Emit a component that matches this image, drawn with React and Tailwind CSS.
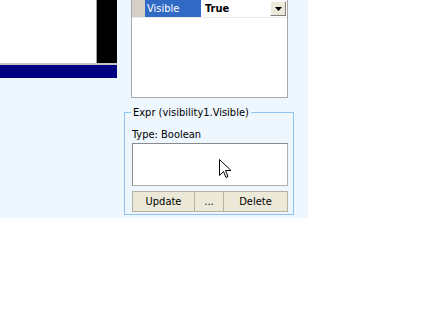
export default function App() {
  return (
    <div className="w-[440px] h-[320px] bg-white relative text-[11px] leading-[13px] text-black [font-family:'DejaVu_Sans_Condensed','DejaVu_Sans',sans-serif]">
      <div className="w-[308px] h-[218px] bg-[#eef6fe] flex">
        <div className="w-[117px] flex flex-col">
          <div className="h-[63px] flex">
            <div className="w-[96px] bg-white" />
            <div className="w-[1px] bg-[#a0a0a0]" />
            <div className="flex-1 bg-black" />
          </div>
          <div className="h-[2px] bg-[#c4c4c4]" />
          <div className="h-[13px] bg-[#000080]" />
        </div>
        <div className="w-[184px] ml-[7px] flex flex-col">
          <div className="w-[157px] h-[98px] ml-[7px] bg-white border-x border-b border-[#a9a9a9]">
            <div className="h-[18px] flex border-b border-[#ececec]">
              <div className="w-[13px] bg-[#d4d0c8]" />
              <div className="w-[56px] bg-[#316ac5] text-white pl-[2px] flex items-center">Visible</div>
              <div className="flex-1 font-bold pl-[4px] flex items-center">True</div>
              <div className="w-[16px] h-[15px] mt-[1px] mr-[1px] bg-[#ece9d8] border border-t-white border-l-white border-r-[#808080] border-b-[#808080] flex items-center justify-center">
                <svg width="7" height="4" viewBox="0 0 7 4"><path d="M0 0H7L3.5 4Z" fill="#000" /></svg>
              </div>
            </div>
          </div>
          <fieldset className="mt-[8px] w-[169px] h-[109px] border border-[#8ec3f2] pl-[7px] pr-[5px]">
            <legend className="-ml-[1px] px-[2px]">Expr (visibility1.Visible)</legend>
            <div className="pt-[9px]">Type: Boolean</div>
            <div className="mt-[2px] w-[156px] h-[43px] bg-white border border-[#b0b0b0] border-t-[#8a8a8a] border-l-[#8a8a8a]" />
            <div className="mt-[5px] w-[156px] h-[21px] flex">
              <div className="w-[63px] bg-[#ece9d8] border border-[#b5b2a2] flex items-center justify-center">Update</div>
              <div className="w-[30px] -ml-[1px] bg-[#ece9d8] border border-[#b5b2a2] flex items-center justify-center">...</div>
              <div className="flex-1 -ml-[1px] bg-[#ece9d8] border border-[#b5b2a2] flex items-center justify-center">Delete</div>
            </div>
          </fieldset>
        </div>
      </div>
      <svg className="absolute left-[219px] top-[159px]" width="13" height="20" viewBox="0 0 13 20">
        <path d="M0.5 0.5V16.5L4.5 12.5L7 18.5L9 17.5L6.5 11.5H12Z" fill="#fff" stroke="#000" strokeWidth="1" strokeLinejoin="miter" />
      </svg>
    </div>
  );
}
